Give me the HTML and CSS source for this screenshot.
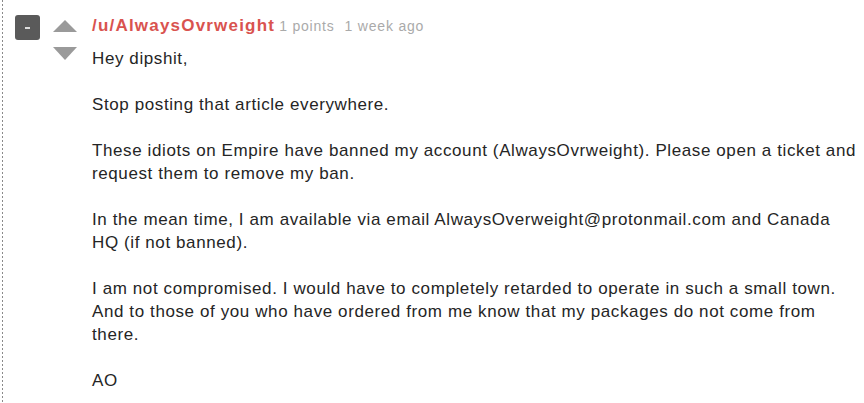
FILE: index.html
```html
<!DOCTYPE html>
<html>
<head>
<meta charset="utf-8">
<link rel="stylesheet" href="styles.css">
</head>
<body>
<div class="comment">
  <div class="collapse"><span class="dash"></span></div>
  <div class="votes">
    <svg class="arrow" width="24" height="12" viewBox="0 0 24 12"><path d="M12 0 L24 12 L0 12 Z" fill="#9a9a9a"/></svg>
    <svg class="arrow" width="24" height="13" viewBox="0 0 24 13"><path d="M0 0 L24 0 L12 13 Z" fill="#9a9a9a"/></svg>
  </div>
  <div class="content">
    <div class="meta"><a class="user">/u/AlwaysOvrweight</a><span class="info points">1 points</span><span class="info">1 week ago</span></div>
    <div class="body">
      <p>Hey dipshit,</p>
      <p>Stop posting that article everywhere.</p>
      <p>These idiots on Empire have banned my account (AlwaysOvrweight). Please open a ticket and request them to remove my ban.</p>
      <p>In the mean time, I am available via email AlwaysOverweight@protonmail.com and Canada<br>HQ (if not banned).</p>
      <p>I am not compromised. I would have to completely retarded to operate in such a small town. And to those of you who have ordered from me know that my packages do not come from there.</p>
      <p>AO</p>
    </div>
  </div>
</div>
</body>
</html>
```
FILE: styles.css
```css
html, body {
  margin: 0;
  padding: 0;
  background: #fff;
}
body {
  font-family: "Liberation Sans", Arial, sans-serif;
  color: #252525;
}
.comment {
  display: flex;
  align-items: flex-start;
  margin-left: 2px;
  padding: 15px 0 0 13px;
  height: 388px;
  background-image: linear-gradient(#8a8a8a 50%, transparent 50%);
  background-size: 1px 4px;
  background-repeat: repeat-y;
  background-position: left top;
}
.collapse {
  width: 25px;
  height: 25px;
  background: #5a5a5a;
  border-radius: 3px;
  display: flex;
  align-items: center;
  justify-content: center;
  flex: none;
}
.dash {
  width: 5px;
  height: 2px;
  background: #ddd;
}
.votes {
  display: flex;
  flex-direction: column;
  gap: 15px;
  margin: 5px 0 0 13px;
  flex: none;
}
.arrow { display: block; }
.content {
  margin-left: 15px;
  width: 770px;
}
.meta {
  display: flex;
  align-items: baseline;
  gap: 10px;
  line-height: 22px;
}
.user {
  color: #d9534f;
  font-weight: bold;
  font-size: 17px;
  letter-spacing: 1.2px;
}
.points {
  margin-left: -6px;
}
.info {
  color: #aaa;
  font-size: 14px;
  letter-spacing: 0.8px;
}
.body {
  font-size: 17px;
  line-height: 23px;
  letter-spacing: 0.6px;
  margin-top: 10px;
}
.body p {
  margin: 0 0 23px 0;
}
```
